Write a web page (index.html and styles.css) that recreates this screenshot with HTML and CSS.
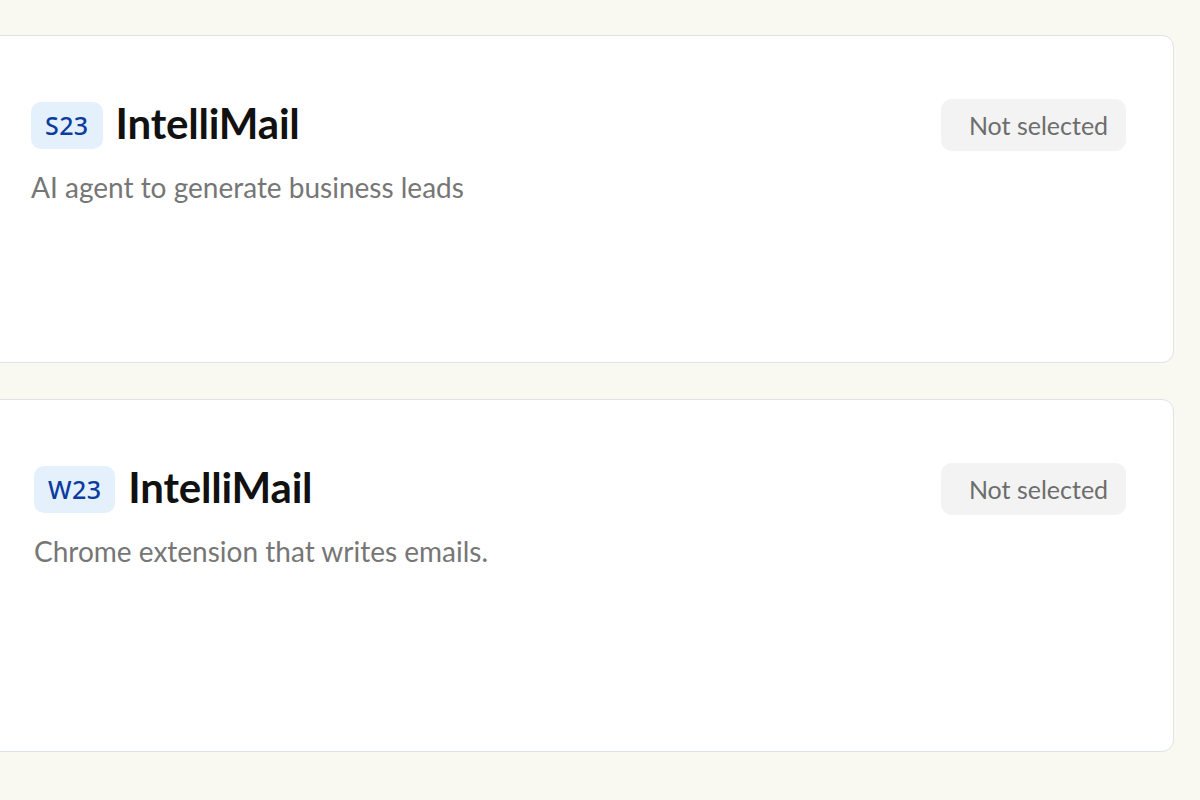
FILE: index.html
```html
<!DOCTYPE html>
<html lang="en">
<head>
<meta charset="utf-8">
<title>IntelliMail</title>
<link rel="stylesheet" href="styles.css">
</head>
<body>
<main class="list">
  <section class="card card-first">
    <div class="card-head">
      <div class="title-group">
        <span class="batch">S23</span>
        <h2 class="name">IntelliMail</h2>
      </div>
      <button class="status">Not selected</button>
    </div>
    <p class="desc">AI agent to generate business leads</p>
  </section>
  <section class="card card-second">
    <div class="card-head">
      <div class="title-group">
        <span class="batch">W23</span>
        <h2 class="name">IntelliMail</h2>
      </div>
      <button class="status">Not selected</button>
    </div>
    <p class="desc">Chrome extension that writes emails.</p>
  </section>
</main>
</body>
</html>
```

FILE: styles.css
```css
html, body {
  margin: 0;
  padding: 0;
}
body {
  background: #f9f8f1;
  font-family: "Lato", "Noto Sans", sans-serif;
  width: 1200px;
  height: 800px;
  overflow: hidden;
}
.list {
  display: flex;
  flex-direction: column;
  gap: 36px;
  padding-top: 35px;
  margin-left: -12px;
  width: 1186px;
}
.card {
  background: #ffffff;
  border: 1px solid #dde3e6;
  border-radius: 12px;
  box-sizing: border-box;
  padding: 62px 47px 0 42px;
}
.card-first {
  height: 328px;
}
.card-second {
  height: 353px;
  padding-left: 45px;
}
.card-head {
  display: flex;
  align-items: center;
  justify-content: space-between;
}
.title-group {
  display: flex;
  align-items: center;
  gap: 13px;
}
.batch {
  display: inline-flex;
  align-items: center;
  height: 47px;
  padding: 0 14px;
  border-radius: 10px;
  background: #e5f0fd;
  color: #0d3c9f;
  font-family: "Noto Sans", sans-serif;
  font-size: 25px;
  font-weight: 500;
  letter-spacing: 0.4px;
}
.name {
  margin: 0 0 4px 0;
  font-size: 42px;
  font-weight: 700;
  color: #111111;
  letter-spacing: -0.2px;
}
.status {
  width: 185px;
  height: 52px;
  border: none;
  border-radius: 11px;
  background: #f3f3f3;
  color: #6d6d6d;
  font-family: "Lato", sans-serif;
  font-size: 25px;
  padding: 0 0 0 10px;
}
.desc {
  margin: 18px 0 0 0;
  font-size: 28px;
  font-weight: 400;
  color: #767676;
}
```
